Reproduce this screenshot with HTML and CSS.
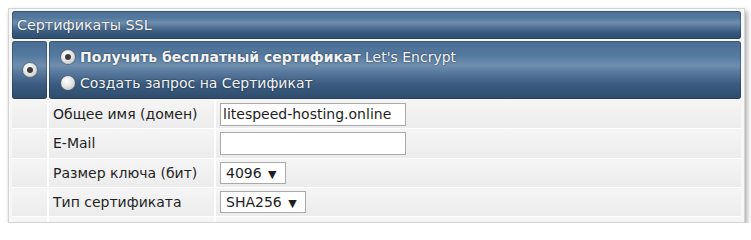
FILE: index.html
```
<!DOCTYPE html>
<html lang="ru">
<head>
<meta charset="utf-8">
<title>Сертификаты SSL</title>
<link rel="stylesheet" href="styles.css">
</head>
<body>
<div class="panel">
  <div class="bar title">Сертификаты SSL</div>
  <div class="opts">
    <div class="bar side"><span class="radio checked"></span></div>
    <div class="bar choices">
      <div class="choice"><span class="radio checked"></span><b>Получить бесплатный сертификат</b>&nbsp;Let's Encrypt</div>
      <div class="choice"><span class="radio"></span>Создать запрос на Сертификат</div>
    </div>
  </div>
  <div class="form">
    <div class="cell"></div><div class="cell label">Общее имя (домен)</div><div class="cell val"><span class="input">litespeed-hosting.online</span></div>
    <div class="cell"></div><div class="cell label">E-Mail</div><div class="cell val"><span class="input"></span></div>
    <div class="cell"></div><div class="cell label">Размер ключа (бит)</div><div class="cell val"><span class="select">4096 <i>▼</i></span></div>
    <div class="cell"></div><div class="cell label">Тип сертификата</div><div class="cell val"><span class="select">SHA256 <i>▼</i></span></div>
    <div class="cell last"></div><div class="cell last"></div><div class="cell last"></div>
  </div>
</div>
</body>
</html>
```
FILE: styles.css
```
html, body { margin: 0; padding: 0; background: #fff; }
body { padding: 8px 0 0 8px; font-family: "DejaVu Sans", Verdana, sans-serif; font-size: 14px; }
.panel {
  width: 737px;
  height: 215px;
  box-sizing: border-box;
  background: #f7f7f7;
  border: 1px solid #d4d4d4;
  box-shadow: 2px 3px 5px rgba(0,0,0,0.35);
  padding: 2px 3px 0 3px;
  overflow: hidden;
}
.bar {
  background: linear-gradient(#4a6d93 0%, #557a9f 25%, #6f8eae 42%, #57789c 55%, #3a5b7f 75%, #2e4c6d 100%);
  border-radius: 3px;
  box-shadow: inset 0 0 0 1px rgba(20,40,60,0.35);
  color: #f2f4f7;
  text-shadow: 0 0 2px rgba(0,0,0,0.6);
}
.title { height: 28px; line-height: 28px; padding-left: 5px; font-size: 14.3px; }
.opts { display: flex; gap: 2px; margin-top: 2px; height: 58px; }
.side { width: 35px; display: flex; align-items: center; justify-content: center; }
.choices { flex: 1; display: flex; flex-direction: column; justify-content: center; gap: 7px; padding-left: 12px; }
.choice { display: flex; align-items: center; height: 19px; white-space: pre; }
.choice b { font-weight: bold; }
.radio {
  display: inline-block; width: 14px; height: 14px; border-radius: 50%; flex: none;
  background: radial-gradient(circle at 40% 35%, #ffffff 0%, #e6e6e6 45%, #b9b9b9 100%);
  box-shadow: 0 0 0 1px rgba(90,90,90,0.5);
  position: relative; margin-right: 5px;
}
.side .radio { margin-right: 0; }
.radio.checked::after {
  content: ""; position: absolute; left: 4px; top: 4px; width: 6px; height: 6px; border-radius: 50%;
  background: #3c3c3c;
}
.form {
  display: grid;
  grid-template-columns: 35px 165px 1fr;
  grid-auto-rows: 28.3px;
  column-gap: 2px;
  row-gap: 1px;
  background: #fff;
  margin-top: 1px;
}
.cell { background: linear-gradient(#f5f5f5, #ececec); display: flex; align-items: center; color: #1f1f1f; }
.label { padding-left: 4px; }
.val { padding-left: 4px; }
.last { background: #f5f5f5; }
.input {
  box-sizing: border-box; width: 186px; height: 23px; border: 1px solid #a9a9a9; background: #fff;
  padding-left: 2px; line-height: 21px; color: #1e1e1e; font-size: 14px; white-space: nowrap; overflow: hidden;
}
.select {
  box-sizing: border-box; height: 22px; border: 1px solid #a9a9a9; background: #fff;
  padding: 0 8px 0 5px; line-height: 20px; color: #1e1e1e; font-size: 14px;
}
.select i { font-style: normal; font-size: 11px; margin-left: 2px; }
```
